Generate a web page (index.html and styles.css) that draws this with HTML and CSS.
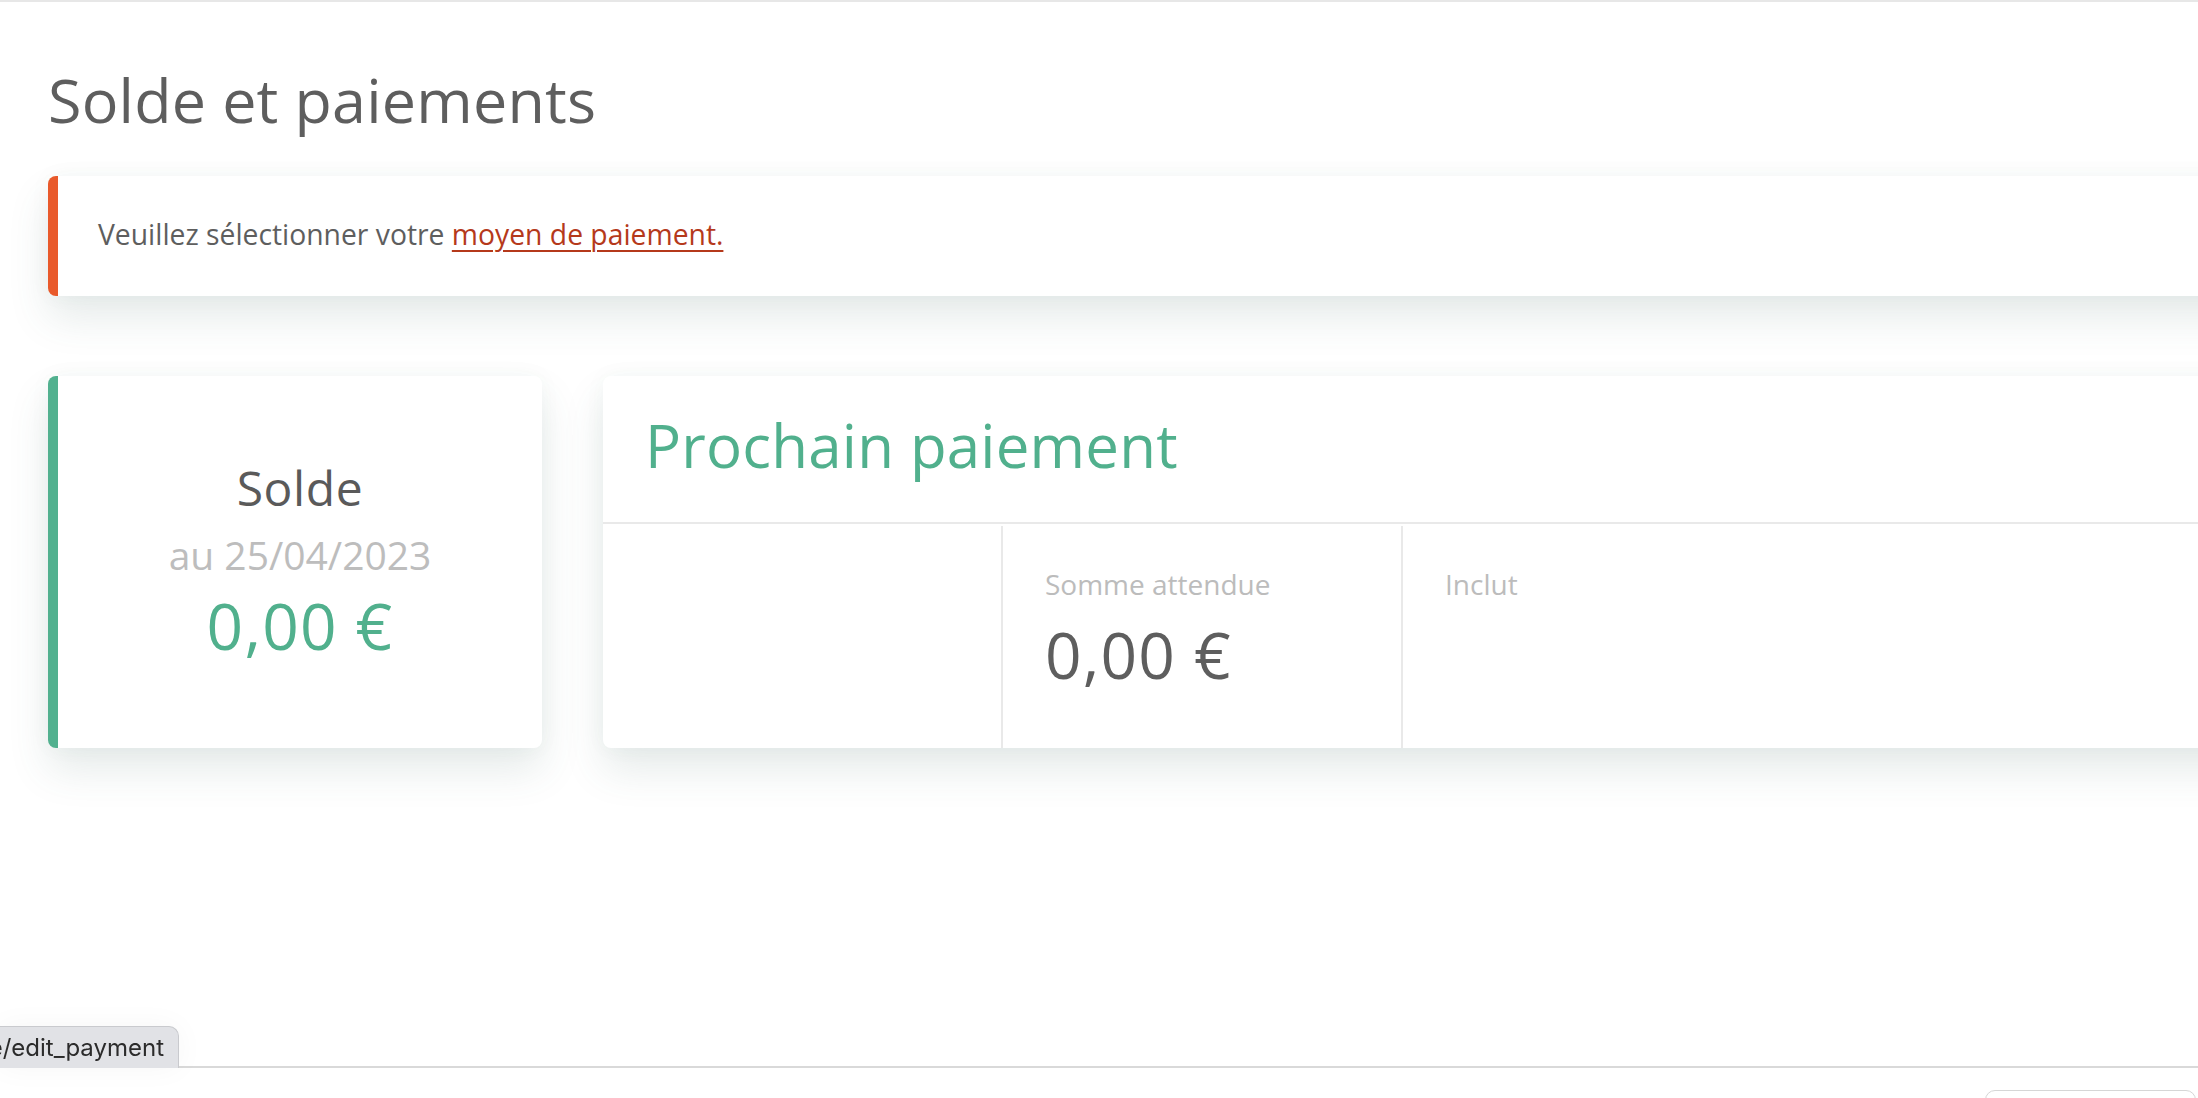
FILE: index.html
```html
<!DOCTYPE html>
<html lang="fr">
<head>
<meta charset="utf-8">
<title>Solde et paiements</title>
<link rel="stylesheet" href="styles.css">
</head>
<body>
<div class="topline"></div>
<main class="content">
  <h1 class="page-title">Solde et paiements</h1>
  <div class="alert">
    Veuillez sélectionner votre <a class="alert-link" href="#">moyen de paiement.</a>
  </div>
  <div class="cards">
    <section class="card card-balance">
      <div class="balance-title">Solde</div>
      <div class="balance-date">au 25/04/2023</div>
      <div class="balance-amount">0,00 €</div>
    </section>
    <section class="card card-next">
      <header class="next-header">
        <h2 class="next-title">Prochain paiement</h2>
      </header>
      <div class="next-row">
        <div class="next-col next-col-first"></div>
        <div class="next-col">
          <div class="next-label">Somme attendue</div>
          <div class="next-amount">0,00 €</div>
        </div>
        <div class="next-col next-col-last">
          <div class="next-label">Inclut</div>
        </div>
      </div>
    </section>
  </div>
</main>
<footer class="footer">
  <div class="footer-widget"></div>
</footer>
<div class="status-url"><span class="status-text">e/edit_payment</span></div>
</body>
</html>
```

FILE: styles.css
```css
html, body {
  margin: 0;
  padding: 0;
  overflow: hidden;
  background: #ffffff;
}

body {
  font-family: "Open Sans", "Liberation Sans", sans-serif;
  color: #5e5e5e;
  width: 2198px;
  height: 1098px;
}

.topline {
  height: 2px;
  background: #e7e7e7;
}

.content {
  padding-left: 48px;
  width: 2700px;
}

.page-title {
  margin: 62px 0 0 0;
  font-size: 61px;
  line-height: 72px;
  font-weight: 400;
  letter-spacing: 0.2px;
  color: #5e5e5e;
}

.alert {
  margin-top: 40px;
  box-sizing: border-box;
  height: 120px;
  padding: 38px 0 0 40px;
  background: #ffffff;
  border-left: 10px solid #e95a2b;
  border-radius: 8px 0 0 8px;
  font-size: 28.3px;
  line-height: 40px;
  color: #5e5e5e;
  box-shadow: 0 22px 40px rgba(60, 100, 90, 0.13), 0 0 22px rgba(60, 90, 80, 0.04);
}

.alert-link {
  color: #b5391b;
  text-decoration: underline;
  text-decoration-thickness: 2px;
  text-underline-offset: 5px;
}

.cards {
  display: flex;
  gap: 61px;
  margin-top: 80px;
}

.card {
  background: #ffffff;
  border-radius: 8px;
  box-shadow: 0 22px 40px rgba(60, 100, 90, 0.13), 0 0 22px rgba(60, 90, 80, 0.04);
  box-sizing: border-box;
  height: 372px;
  flex-shrink: 0;
}

.card-balance {
  width: 494px;
  border-left: 10px solid #52b18f;
  padding-top: 84px;
  text-align: center;
}

.balance-title {
  font-size: 48px;
  line-height: 56px;
  letter-spacing: 0.6px;
  color: #5a5a5a;
  margin-bottom: 16px;
}

.balance-date {
  font-size: 39px;
  line-height: 46px;
  color: #bdbdbd;
  margin-bottom: 10px;
}

.balance-amount {
  font-size: 64px;
  line-height: 76px;
  letter-spacing: 1.2px;
  color: #51b08d;
}

.card-next {
  width: 2000px;
  display: flex;
  flex-direction: column;
}

.next-header {
  height: 148px;
  box-sizing: border-box;
  border-bottom: 2px solid #e9e9e9;
  padding: 33px 0 0 42px;
}

.next-title {
  margin: 0;
  font-size: 60px;
  line-height: 72px;
  font-weight: 400;
  letter-spacing: 0.2px;
  color: #51b08d;
}

.next-row {
  display: flex;
  margin-top: 2px;
  flex: 1;
}

.next-col {
  width: 400px;
  box-sizing: border-box;
  border-left: 2px solid #e9e9e9;
  padding: 41px 0 0 42px;
}

.next-col-first {
  width: 398px;
  border-left: none;
}

.next-col-last {
  flex: 1;
}

.next-label {
  font-size: 28px;
  line-height: 34px;
  color: #bcbcbc;
  margin-bottom: 16px;
}

.next-amount {
  font-size: 64px;
  line-height: 76px;
  letter-spacing: 1.2px;
  color: #5e5e5e;
}

.footer {
  margin-top: 318px;
  border-top: 2px solid #d9d9d9;
  display: flex;
  justify-content: flex-end;
  padding: 22px 2px 0 0;
}

.footer-widget {
  width: 211px;
  height: 40px;
  box-sizing: border-box;
  border: 1px solid #d6d6d6;
  border-radius: 10px;
  background: #ffffff;
}

.status-url {
  position: fixed;
  left: 0;
  bottom: 30px;
  width: 179px;
  height: 42px;
  box-sizing: border-box;
  background: #e1e2e6;
  border: 1px solid #c9cace;
  border-left: none;
  border-bottom: none;
  border-radius: 0 10px 0 0;
  display: flex;
  justify-content: flex-end;
  align-items: center;
  padding-right: 14px;
  overflow: hidden;
  box-shadow: 0 0 30px rgba(0, 0, 0, 0.04);
}

.status-text {
  font-family: "Inter", "Liberation Sans", sans-serif;
  font-size: 24px;
  line-height: 30px;
  color: #2b2b2b;
  white-space: nowrap;
  flex-shrink: 0;
}
```
